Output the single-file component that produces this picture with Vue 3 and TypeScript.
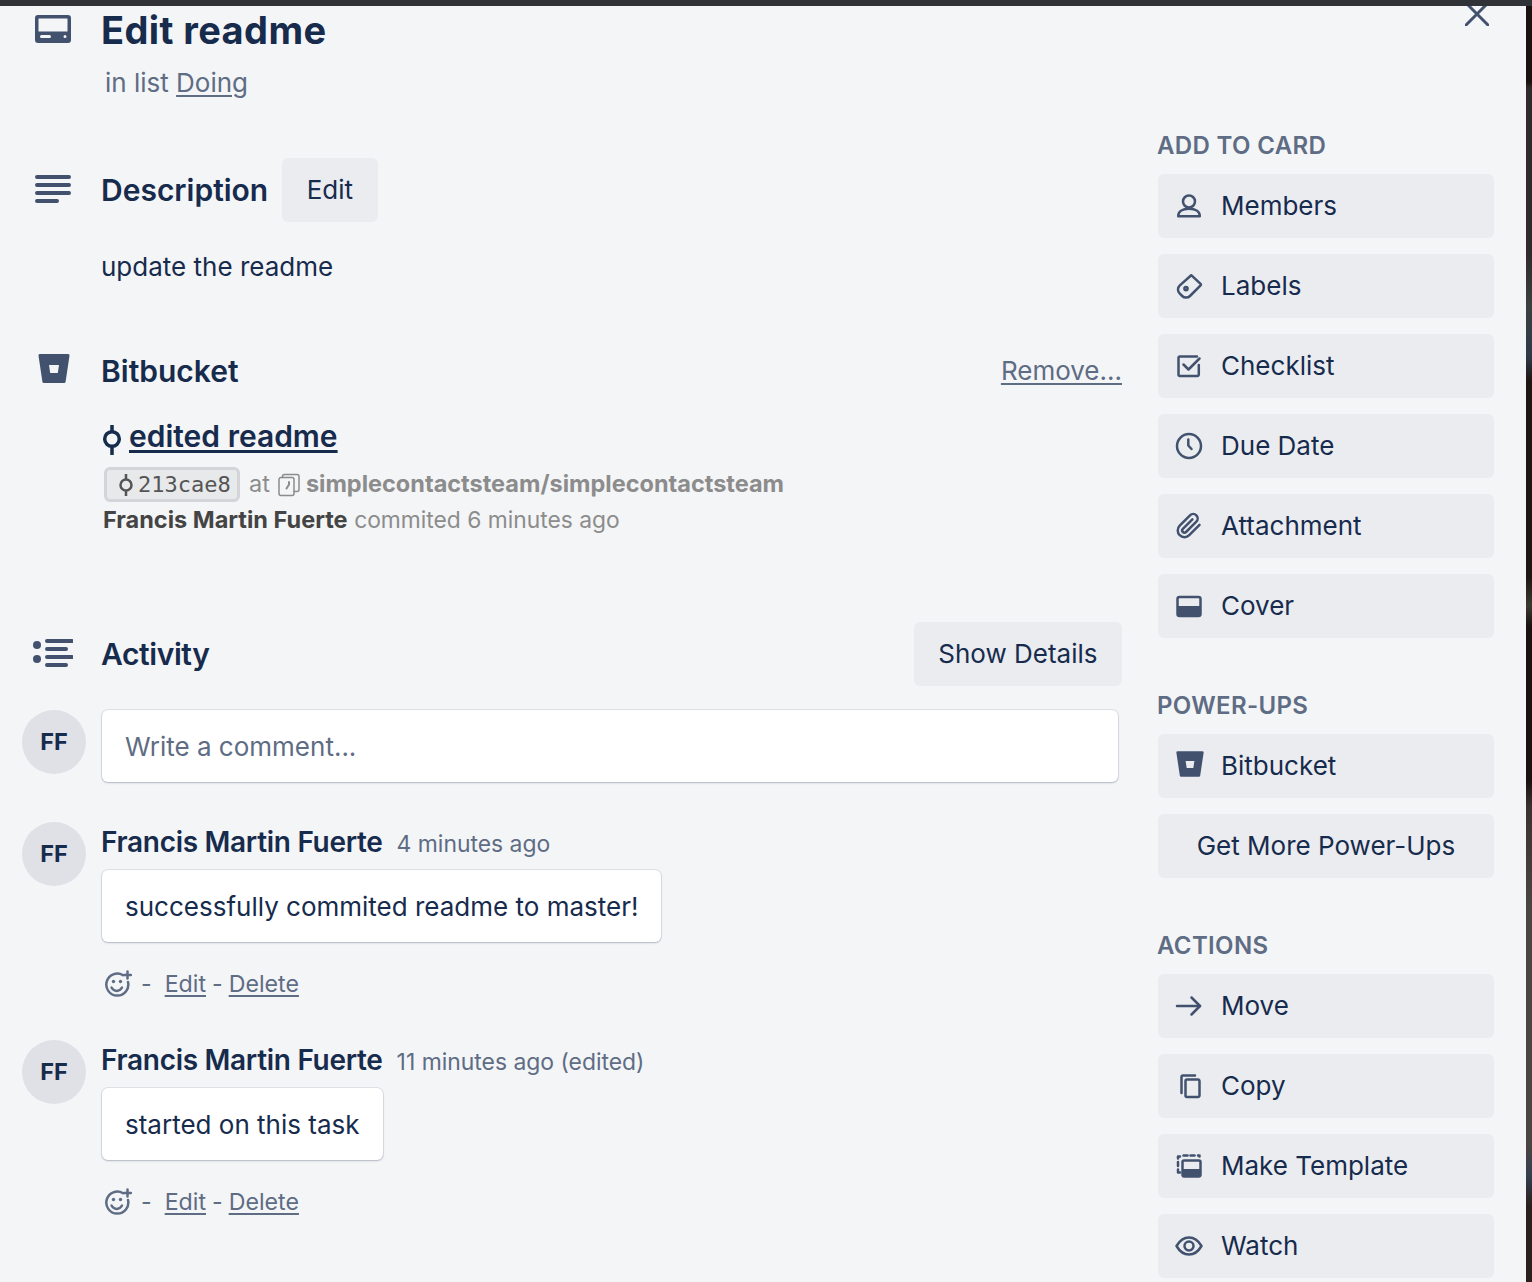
<script setup lang="ts">
interface SideItem {
  label: string
  strokes?: string[]
  fills?: string[]
  tf?: string
}

const circle = (cx: number, cy: number, r: number): string =>
  `M${cx} ${cy - r}a${r} ${r} 0 1 1 0 ${2 * r}a${r} ${r} 0 1 1 0-${2 * r}z`

const bucket =
  'M2 2h28a1.5 1.5 0 0 1 1.5 1.8L27.6 29.8A1.5 1.5 0 0 1 26 31H6a1.5 1.5 0 0 1-1.6-1.2L.5 3.8A1.5 1.5 0 0 1 2 2zM11 13l1.2 8h7.6L21 13z'

const addToCard: SideItem[] = [
  { label: 'Members', strokes: [circle(16, 11.5, 6), 'M5.2 26.2c0-4.5 4-7.500 10.8-7.500s10.8 3 10.8 7.500z'] },
  {
    label: 'Labels',
    strokes: [
      'M18.2 5.2L27.6 13.8a1 1 0 0 1 0 1.5L17 26a5.5 5.5 0 0 1-7.8 0L6.6 23.4a5.5 5.5 0 0 1 0-7.8z',
      circle(13, 18.6, 1.6),
    ],
  },
  {
    label: 'Checklist',
    strokes: [
      'M25.8 15V24.5a1.5 1.5 0 0 1-1.5 1.5H7a1.5 1.5 0 0 1-1.5-1.5V8A1.5 1.5 0 0 1 7 6.5h17',
      'M10.5 14.5l5 5L26.5 8.5',
    ],
  },
  { label: 'Due Date', strokes: [circle(16, 16, 12), 'M15.3 9.5V15.5L18.5 19'] },
  {
    label: 'Attachment',
    tf: 'translate(2.5 2.5) scale(1.12)',
    strokes: [
      'M21.44 11.05l-9.19 9.19a6 6 0 0 1-8.49-8.49l9.19-9.19a4 4 0 0 1 5.66 5.66l-9.2 9.19a2 2 0 0 1-2.83-2.83l8.49-8.48',
    ],
  },
  {
    label: 'Cover',
    strokes: ['M6.5 7h19a2 2 0 0 1 2 2v15a2 2 0 0 1-2 2h-19a2 2 0 0 1-2-2V9a2 2 0 0 1 2-2z'],
    fills: ['M4.5 16h23v8a2 2 0 0 1-2 2h-19a2 2 0 0 1-2-2z'],
  },
]

const actions: SideItem[] = [
  { label: 'Move', strokes: ['M4 16H27', 'M18.5 7.5L27 16L18.5 24.5'] },
  {
    label: 'Copy',
    strokes: [
      'M14 9.5h11a1.5 1.5 0 0 1 1.5 1.5v14.5a1.5 1.5 0 0 1-1.5 1.5H14a1.5 1.5 0 0 1-1.5-1.5V11A1.5 1.5 0 0 1 14 9.5z',
      'M8.5 23V7A1.5 1.5 0 0 1 10 5.5h12',
    ],
  },
  {
    label: 'Make Template',
    strokes: [
      'M11 10.5h15a1.5 1.5 0 0 1 1.5 1.5v13a1.5 1.5 0 0 1-1.5 1.5H11A1.5 1.5 0 0 1 9.5 25V12A1.5 1.5 0 0 1 11 10.5z',
      'M5 8.5V6.5h2',
      'M10.5 5.5h4',
      'M17.5 5.5h4',
      'M25 5.5h1.5v1',
      'M5 12v4',
      'M5 19.5v3h2',
    ],
    fills: ['M9.5 19h18v6a1.5 1.5 0 0 1-1.5 1.5H11A1.5 1.5 0 0 1 9.5 25z'],
  },
  {
    label: 'Watch',
    strokes: [
      'M3.5 16C7 10 11 7.5 16 7.5S25 10 28.5 16C25 22 21 24.5 16 24.5S7 22 3.5 16z',
      circle(16, 16, 4.5),
    ],
  },
]

interface CommentItem {
  when: string
  text: string
}

const comments: CommentItem[] = [
  { when: '4 minutes ago', text: 'successfully commited readme to master!' },
  { when: '11 minutes ago (edited)', text: 'started on this task' },
]
</script>

<template>
  <div class="page">
    <div class="topbar"></div>
    <div class="body">
      <div class="panel">
        <svg class="close" viewBox="0 0 24 24" width="24" height="24" aria-hidden="true">
          <path d="M1 1L23 23M23 1L1 23" />
        </svg>

        <main class="main">
          <section class="row title-row">
            <div class="gutter">
              <svg width="36" height="28" viewBox="0 0 36 28" class="g-icon card-icon">
                <path
                  fill-rule="evenodd"
                  d="M3 0h30a3 3 0 0 1 3 3v22a3 3 0 0 1-3 3H3a3 3 0 0 1-3-3V3a3 3 0 0 1 3-3zM4 3.5a.5.5 0 0 0-.5.5v12.5h29V4a.5.5 0 0 0-.5-.5zM6.5 20a1.5 1.5 0 0 0 0 3h8a1.5 1.5 0 0 0 0-3zM30 20a1.5 1.5 0 0 0 0 3a1.5 1.5 0 0 0 0-3z"
                />
              </svg>
            </div>
            <div class="content">
              <h1 class="title">Edit readme</h1>
              <p class="in-list">in list <a class="link">Doing</a></p>
            </div>
          </section>

          <section class="row desc-row">
            <div class="gutter">
              <svg width="36" height="28" viewBox="0 0 36 28" class="g-icon lines">
                <path d="M2 2H34M2 10H34M2 18H34M2 26H22" />
              </svg>
            </div>
            <div class="content head">
              <h2 class="h2">Description</h2>
              <button class="btn"><span class="lift">Edit</span></button>
            </div>
          </section>
          <p class="desc-text">update the readme</p>

          <section class="row bb-row">
            <div class="gutter">
              <svg width="32" height="33" viewBox="0 0 32 33" class="g-icon bb-icon">
                <path fill-rule="evenodd" :d="bucket" />
              </svg>
            </div>
            <div class="content head spread">
              <h2 class="h2">Bitbucket</h2>
              <a class="link remove">Remove...</a>
            </div>
          </section>

          <div class="commit">
            <div class="commit-title">
              <svg width="20" height="32" viewBox="0 0 20 32" class="commit-icon">
                <circle cx="10" cy="15" r="7.3" />
                <path d="M10 1V7.5M10 22.5V31" />
              </svg>
              <a class="commit-link">edited readme</a>
            </div>
            <div class="commit-meta">
              <span class="hash">
                <svg width="16" height="24" viewBox="0 0 16 24" class="hash-icon">
                  <circle cx="8" cy="12" r="5.5" />
                  <path d="M8 1V6.5M8 17.5V23" />
                </svg>
                213cae8
              </span>
              <span class="at">at</span>
              <svg width="24" height="24" viewBox="0 0 24 24" class="repo-icon">
                <path d="M5 4.5h11a2 2 0 0 1 2 2v14a2 2 0 0 1-2 2H5a2 2 0 0 1-2-2v-14a2 2 0 0 1 2-2z" />
                <path d="M6.5 4.5V3.5a2 2 0 0 1 2-2H21a2 2 0 0 1 2 2v13a2 2 0 0 1-2 2h-3" />
                <path class="comma" d="M13 9v2.5l-2.5 4" />
              </svg>
              <span class="repo">simplecontactsteam/simplecontactsteam</span>
            </div>
            <div class="commit-by"><b>Francis Martin Fuerte</b> <span>commited 6 minutes ago</span></div>
          </div>

          <section class="row activity-row">
            <div class="gutter">
              <svg width="40" height="28" viewBox="0 0 40 28" class="g-icon lines">
                <circle class="dot" cx="4" cy="6" r="4" />
                <circle class="dot" cx="4" cy="20" r="4" />
                <path d="M14 2H39M14 10H33M14 18H39M14 26H33" />
              </svg>
            </div>
            <div class="content head spread">
              <h2 class="h2 tight">Activity</h2>
              <button class="btn"><span class="lift">Show Details</span></button>
            </div>
          </section>

          <section class="row new-comment">
            <div class="gutter"><div class="avatar">FF</div></div>
            <div class="comment-input">Write a comment...</div>
          </section>

          <section v-for="c in comments" :key="c.when" class="row comment">
            <div class="gutter"><div class="avatar">FF</div></div>
            <div class="content">
              <div class="comment-head">
                <span class="author">Francis Martin Fuerte</span>
                <span class="when">{{ c.when }}</span>
              </div>
              <div class="bubble">{{ c.text }}</div>
              <div class="comment-actions">
                <svg width="28" height="28" viewBox="0 0 28 28" class="react">
                  <path d="M19 5.2A11 11 0 1 0 24 12" />
                  <path d="M7.5 17.5c2.5 4.5 8 4.5 10.5 0" />
                  <circle class="dot" cx="9.5" cy="11.5" r="1.7" />
                  <circle class="dot" cx="16.5" cy="11.5" r="1.7" />
                  <path class="plus" d="M23.5 1.5v7M20 5h7" />
                </svg>
                <span class="dash">-</span>
                <a class="link">Edit</a>
                <span class="dash2">-</span>
                <a class="link">Delete</a>
              </div>
            </div>
          </section>
        </main>

        <aside class="side">
          <h3 class="side-h first">ADD TO CARD</h3>
          <div class="side-list">
            <button v-for="item in addToCard" :key="item.label" class="side-btn">
              <svg class="side-icon" width="32" height="32" viewBox="0 0 32 32">
                <g :transform="item.tf">
                  <path v-for="d in item.fills" :key="d" class="f" :d="d" />
                  <path v-for="d in item.strokes" :key="d" class="s" :d="d" />
                </g>
              </svg>
              <span class="lift">{{ item.label }}</span>
            </button>
          </div>

          <h3 class="side-h">POWER-UPS</h3>
          <div class="side-list">
            <button class="side-btn">
              <svg class="side-icon" width="32" height="32" viewBox="-3.4 0.5 36.5 36.5">
                <path class="f" fill-rule="evenodd" :d="bucket" />
              </svg>
              <span class="lift">Bitbucket</span>
            </button>
            <button class="side-btn center"><span class="lift">Get More Power-Ups</span></button>
          </div>

          <h3 class="side-h">ACTIONS</h3>
          <div class="side-list">
            <button v-for="item in actions" :key="item.label" class="side-btn">
              <svg class="side-icon" width="32" height="32" viewBox="0 0 32 32">
                <g :transform="item.tf">
                  <path v-for="d in item.fills" :key="d" class="f" :d="d" />
                  <path v-for="d in item.strokes" :key="d" class="s" :d="d" />
                </g>
              </svg>
              <span class="lift">{{ item.label }}</span>
            </button>
          </div>
        </aside>
      </div>
      <div class="strip"></div>
    </div>
  </div>
</template>

<style>
html,
body {
  margin: 0;
  background: #f4f5f7;
}
</style>

<style scoped>
.page {
  width: 1532px;
  height: 1282px;
  overflow: hidden;
  display: flex;
  flex-direction: column;
  background: #f4f5f7;
  color: #172b4d;
  font-family: Inter, 'Liberation Sans', sans-serif;
  font-size: 26px;
}
.topbar {
  height: 6px;
  flex: none;
  background: #2f3337;
  position: relative;
  z-index: 2;
}
.body {
  flex: 1;
  display: flex;
  min-height: 0;
}
.panel {
  position: relative;
  width: 1526px;
  flex: none;
  display: flex;
  gap: 36px;
}
.strip {
  flex: 1;
  background: linear-gradient(
    180deg,
    #1a1210 0,
    #1a1210 76px,
    #2f2a2c 82px,
    #2f2a2c 245px,
    #3a3f3f 300px,
    #2f3a48 350px,
    #1f1513 375px,
    #1f1513 570px,
    #3a3a30 600px,
    #1a1210 620px,
    #1a1210 775px,
    #3a3230 800px,
    #4a4442 900px,
    #4a4442 1140px,
    #33404f 1170px,
    #2a1f1c 1200px,
    #2a1f1c 1282px
  );
}
.close {
  position: absolute;
  left: 1465px;
  top: -4px;
  fill: none;
  stroke: #42526e;
  stroke-width: 3;
  stroke-linecap: round;
}
.main {
  width: 1122px;
  flex: none;
}
.row {
  display: flex;
  align-items: flex-start;
}
.gutter {
  width: 64px;
  margin: 0 15px 0 22px;
  flex: none;
  display: flex;
  justify-content: center;
}
.content {
  flex: 1;
  min-width: 0;
}
.head {
  display: flex;
  align-items: center;
  gap: 14px;
  height: 64px;
}
.spread {
  justify-content: space-between;
}
.lift {
  padding-bottom: 1px;
}
.g-icon {
  fill: #42526e;
  display: block;
}
.card-icon {
  margin: 9px 0 0 -2px;
}
.lines {
  fill: none;
  stroke: #42526e;
  stroke-width: 4;
  stroke-linecap: round;
}
.lines .dot {
  fill: #42526e;
  stroke: none;
}
.desc-row .lines {
  margin: 17px 0 0 -2px;
}
.bb-icon {
  margin-top: 1px;
}
.activity-row .lines {
  margin: 17px 0 0 -2px;
}
.title {
  margin: 0;
  font-size: 38px;
  line-height: 48px;
  font-weight: 700;
  letter-spacing: 0.4px;
}
.in-list {
  margin: 11px 0 0 4px;
  color: #5e6c84;
  line-height: 36px;
}
.link {
  color: #5e6c84;
  text-decoration: underline;
  text-underline-offset: 3px;
}
.remove {
  padding-bottom: 2px;
}
.desc-row {
  margin-top: 57px;
}
.h2 {
  margin: 0;
  font-size: 30px;
  line-height: 40px;
  font-weight: 600;
}
.h2.tight {
  letter-spacing: -0.4px;
}
.btn {
  border: 0;
  border-radius: 6px;
  background: #eaecf0;
  color: #172b4d;
  font: inherit;
  height: 64px;
  padding: 0 24.5px;
  display: flex;
  align-items: center;
}
.desc-text {
  margin: 25px 0 0 101px;
  line-height: 40px;
}
.bb-row {
  margin-top: 64px;
  height: 40px;
}
.bb-row .head {
  height: 40px;
}
.commit {
  margin: 26px 0 0 103px;
}
.commit-title {
  display: flex;
  align-items: center;
  gap: 7px;
  height: 40px;
  margin-left: -1px;
}
.commit-icon {
  fill: none;
  stroke: #172b4d;
  stroke-width: 3.5;
  flex: none;
  margin-top: 6px;
}
.commit-link {
  font-size: 30px;
  font-weight: 600;
  color: #172b4d;
  text-decoration: underline;
  text-underline-offset: 3px;
  padding-bottom: 2px;
}
.commit-meta {
  display: flex;
  align-items: center;
  margin-top: 10px;
  height: 35px;
  color: #8c8c8c;
  font-size: 23.5px;
}
.hash {
  display: flex;
  align-items: center;
  gap: 4px;
  box-sizing: border-box;
  width: 136px;
  height: 35px;
  margin-left: 1px;
  padding-left: 11px;
  border: 3px solid #d3d5d8;
  border-radius: 6px;
  background: #e8e9eb;
  color: #555;
  font-family: 'DejaVu Sans Mono', monospace;
  font-size: 22px;
}
.hash-icon {
  fill: none;
  stroke: #555;
  stroke-width: 2.5;
  flex: none;
}
.at {
  margin-left: 9px;
  padding-bottom: 2px;
}
.repo-icon {
  margin: 0 6px 0 6px;
  fill: none;
  stroke: #8c8c8c;
  stroke-width: 1.5;
  stroke-linecap: round;
}
.repo-icon .comma {
  stroke-width: 2;
}
.repo {
  font-weight: 700;
  padding-bottom: 2px;
}
.commit-by {
  margin-top: 1px;
  line-height: 34px;
  font-size: 23.5px;
  color: #8c8c8c;
}
.commit-by span {
  font-size: 22.8px;
}
.commit-by b {
  color: #444;
  font-weight: 700;
}
.activity-row {
  margin-top: 85px;
}
.new-comment {
  margin-top: 24px;
  padding-bottom: 2px;
}
.avatar {
  width: 64px;
  height: 64px;
  border-radius: 50%;
  background: #dfe1e6;
  display: flex;
  align-items: center;
  justify-content: center;
  font-size: 23.5px;
  font-weight: 700;
  padding-bottom: 2px;
  box-sizing: border-box;
}
.comment-input {
  width: 1016px;
  height: 72px;
  box-sizing: border-box;
  margin-left: 1px;
  padding: 0 23px;
  display: flex;
  align-items: center;
  background: #fff;
  border-radius: 6px;
  box-shadow: 0 1px 2px rgba(9, 30, 66, 0.22), 0 0 0 1px rgba(9, 30, 66, 0.08);
  color: #5e6c84;
}
.comment {
  margin-top: 41px;
}
.comment .avatar {
  margin-top: -3px;
}
.comment-head {
  display: flex;
  align-items: baseline;
  gap: 14px;
  height: 36px;
  line-height: 34px;
}
.author {
  font-size: 28px;
  font-weight: 600;
  letter-spacing: -0.3px;
}
.when {
  font-size: 22.9px;
  color: #5e6c84;
}
.bubble {
  width: fit-content;
  margin: 9px 0 0 1px;
  height: 72px;
  line-height: 73px;
  padding: 0 23px;
  background: #fff;
  border-radius: 6px;
  box-shadow: 0 1px 2px rgba(9, 30, 66, 0.22), 0 0 0 1px rgba(9, 30, 66, 0.08);
}
.comment-actions {
  display: flex;
  align-items: center;
  margin-top: 24px;
  height: 36px;
  font-size: 23.2px;
  color: #5e6c84;
}
.react {
  fill: none;
  stroke: #5e6c84;
  stroke-width: 2.5;
  stroke-linecap: round;
  margin-left: 3px;
}
.react .dot {
  fill: #5e6c84;
  stroke: none;
}
.dash {
  margin: 0 13px 0 9px;
}
.dash2 {
  margin: 0 6px;
}
.side {
  width: 336px;
  flex: none;
  padding-top: 126px;
}
.side-h {
  margin: 54px 0 14px -1px;
  font-size: 24px;
  line-height: 28px;
  font-weight: 600;
  letter-spacing: 0.35px;
  color: #5e6c84;
}
.side-h.first {
  margin-top: 0;
}
.side-list {
  display: flex;
  flex-direction: column;
  gap: 16px;
}
.side-btn {
  display: flex;
  align-items: center;
  height: 64px;
  padding: 0 0 0 15px;
  border: 0;
  border-radius: 6px;
  background: #eaecf0;
  color: #172b4d;
  font: inherit;
}
.side-btn.center {
  justify-content: center;
  padding: 0;
}
.side-icon {
  flex: none;
  margin-right: 16px;
}
.side-icon .s {
  fill: none;
  stroke: #42526e;
  stroke-width: 2.5;
  stroke-linecap: round;
  stroke-linejoin: round;
  vector-effect: non-scaling-stroke;
}
.side-icon .f {
  fill: #42526e;
}
</style>
